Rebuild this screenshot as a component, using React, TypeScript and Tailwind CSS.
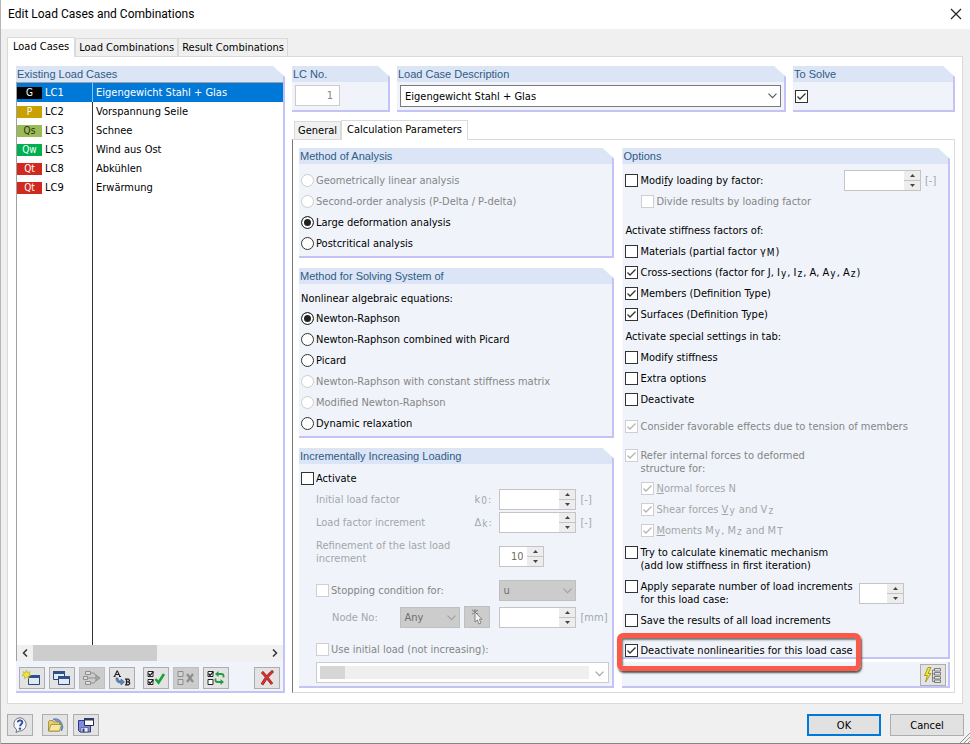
import React, { useId } from "react";

type Tone = "normal" | "muted" | "faint";

const toneText: Record<Tone, string> = {
  normal: "text-black",
  muted: "text-[#858585]",
  faint: "text-[#a3a6a9]",
};

function Group({
  title,
  className = "",
  children,
}: {
  title: string;
  className?: string;
  children: React.ReactNode;
}) {
  return (
    <section
      className={`flex flex-col border-r-2 border-b-2 border-[#c3c3f6] bg-[#f0f4fa] [clip-path:polygon(0_0,calc(100%_-_12px)_0,100%_11px,100%_100%,0_100%)] ${className}`}
    >
      <h2 className="h-4 shrink-0 bg-[#dbe5f5] pl-px font-['Liberation_Sans',Arial,sans-serif] text-[11px] leading-4 text-[#2f5b85]">
        {title}
      </h2>
      {children}
    </section>
  );
}

function CheckMark({ tone }: { tone: Tone }) {
  return (
    <svg viewBox="0 0 13 13" className="pointer-events-none absolute inset-0 size-[13px]" fill="none">
      <path d="M2.5 6.5 5 9 10.5 3.5" stroke={tone === "normal" ? "#333" : "#b4b4b4"} strokeWidth="1.3" />
    </svg>
  );
}

function Check({
  children,
  label,
  checked = false,
  tone = "normal",
  lines = 1,
  className = "",
}: {
  children?: React.ReactNode;
  label?: string;
  checked?: boolean;
  tone?: Tone;
  lines?: 1 | 2;
  className?: string;
}) {
  return (
    <label
      className={`flex gap-0.5 ${lines === 1 ? "h-[21px] items-center" : "items-start"} ${toneText[tone]} ${className}`}
    >
      <span className="relative size-[13px] shrink-0">
        <input
          type="checkbox"
          aria-label={label}
          defaultChecked={checked}
          disabled={tone !== "normal"}
          className="block size-[13px] appearance-none border border-[#333] bg-white disabled:border-[#cfcfcf]"
        />
        {checked && <CheckMark tone={tone} />}
      </span>
      {children && <span className="leading-[13px] whitespace-nowrap">{children}</span>}
    </label>
  );
}

function Radio({
  children,
  name,
  checked = false,
  disabled = false,
}: {
  children: React.ReactNode;
  name: string;
  checked?: boolean;
  disabled?: boolean;
}) {
  return (
    <label
      className={`flex h-[21px] items-center gap-0.5 whitespace-nowrap ${disabled ? "text-[#858585]" : "text-black"}`}
    >
      <input
        type="radio"
        name={name}
        defaultChecked={checked}
        disabled={disabled}
        className="size-[13px] shrink-0 appearance-none rounded-full border border-[#333] bg-white checked:bg-[#222] checked:shadow-[inset_0_0_0_2px_white] disabled:border-[#cccccc]"
      />
      {children}
    </label>
  );
}

function Spin({ label, value = "", className = "" }: { label: string; value?: string; className?: string }) {
  return (
    <span className={`flex h-[21px] border border-[#c4c4c4] bg-white ${className}`}>
      <input
        aria-label={label}
        defaultValue={value}
        disabled
        className="w-full min-w-0 flex-1 pr-1 text-right text-[#6d6d6d]"
      />
      <span className="flex w-4 shrink-0 flex-col divide-y divide-[#c4c4c4] bg-[#ededed]">
        <button type="button" aria-label={`${label} up`} className="grid flex-1 place-items-center">
          <svg viewBox="0 0 5 3" className="h-[3px] w-[5px]">
            <path d="M0 3 2.5 0 5 3z" fill="#444" />
          </svg>
        </button>
        <button type="button" aria-label={`${label} down`} className="grid flex-1 place-items-center">
          <svg viewBox="0 0 5 3" className="h-[3px] w-[5px]">
            <path d="M0 0h5L2.5 3z" fill="#444" />
          </svg>
        </button>
      </span>
    </span>
  );
}

function Chevron({ color }: { color: string }) {
  return (
    <svg viewBox="0 0 9 6" className="pointer-events-none absolute top-2 right-1 h-1.5 w-[9px]" fill="none">
      <path d="M.5.7 4.5 4.7 8.5.7" stroke={color} strokeWidth="1.1" />
    </svg>
  );
}

function GreySelect({ label, value, className = "" }: { label: string; value: string; className?: string }) {
  return (
    <span className={`relative block ${className}`}>
      <select
        aria-label={label}
        disabled
        className="block h-[21px] w-full appearance-none border border-[#bfbfbf] bg-[#cccccc] pl-[3px] text-[#6d6d6d] opacity-100"
      >
        <option>{value}</option>
      </select>
      <Chevron color="#a0a0a0" />
    </span>
  );
}

function ToolButton({
  label,
  disabled = false,
  className = "",
  children,
}: {
  label: string;
  disabled?: boolean;
  className?: string;
  children: React.ReactNode;
}) {
  return (
    <button
      type="button"
      aria-label={label}
      disabled={disabled}
      className={`grid h-[22px] w-[26px] shrink-0 place-items-center border ${disabled ? "border-[#bfbfbf] bg-[#cccccc]" : "border-[#adadad] bg-[#e3e3e3]"} ${className}`}
    >
      <svg viewBox="0 0 20 16" className="h-4 w-5" fill="none">
        {children}
      </svg>
    </button>
  );
}

function NewWindowIcon() {
  return (
    <>
      <path d="M6.5 5.500h11v9h-11z" fill="#dfe9f8" stroke="#30446e" />
      <path d="M6 5h12v3H6z" fill="#2f5088" />
      <path d="m4.500 0 1 2.600 2.800-.9L7 4l2.200 1.500-2.600.6.2 2.600-2.200-1.600L2.400 8.700l.2-2.600L0 5.500 2.200 4 1 1.700l2.600.9z" fill="#f1e23c" stroke="#a99b1d" strokeWidth=".5" />
    </>
  );
}

function CopyWindowIcon() {
  return (
    <>
      <path d="M1.500 1.500h11v8h-11z" fill="#dfe9f8" stroke="#30446e" />
      <path d="M1 1h12v3H1z" fill="#2f5088" />
      <path d="M6.500 6.500h11v8h-11z" fill="#dfe9f8" stroke="#30446e" />
      <path d="M6 6h12v3H6z" fill="#2f5088" />
    </>
  );
}

function CombineIcon() {
  return (
    <g stroke="#8f8f8f">
      <path d="M3.500 1.500h5v3h-5zM1.500 6.500h4v3h-4zM3.500 11.500h5v3h-5z" fill="#dedede" />
      <path d="M9 3h3l3 4M6 8h8M9 13h3l3-4" />
      <path d="m14 5 4 3-4 3z" fill="#a8a8a8" />
    </g>
  );
}

function RenumberIcon() {
  return (
    <>
      <path d="M2.500 6.500 5 1h.4L8 6.500M3.500 4.500h3.500M1.500 6.500h2M7 6.500h2" stroke="#222" strokeWidth="1.100" />
      <path d="M4 8c0 4 2 5 5 5v2l3.500-3L9 9v2c-2 0-3-1-3-3z" fill="#5d86c0" stroke="#2e5590" strokeWidth=".6" />
      <path d="M14.500 9v6M13 9.200h3.500q2 1.300 0 2.700h-2M16.500 12q2.500 1.200 0 2.800H13" stroke="#222" strokeWidth="1.300" />
    </>
  );
}

function SelectAllIcon() {
  return (
    <>
      <path d="M2 1.500h5v5H2zM2 9.500h5v5H2z" fill="#fff" stroke="#222" />
      <path d="m2.500 3.500 1.500 2 3.500-4M2.500 11.500l1.500 2 3.500-4" stroke="#222" strokeWidth="1.300" />
      <path d="m9.500 9 3 3.500L18 4" stroke="#18a33a" strokeWidth="2.600" />
    </>
  );
}

function ClearAllIcon() {
  return (
    <g stroke="#8c8c8c">
      <path d="M2 1.500h5v5H2zM2 9.500h5v5H2z" fill="#d4d4d4" />
      <path d="m11 4 6 8M17 4l-6 8" strokeWidth="2.200" />
    </g>
  );
}

function InvertIcon() {
  return (
    <>
      <path d="M2 1.500h5v5H2zM2 9.500h5v5H2z" fill="#fff" stroke="#222" />
      <path d="m2.500 3.500 1.500 2 3.500-4" stroke="#222" strokeWidth="1.300" />
      <path d="M17.500 7.500V6q0-2-2-2H12M9.500 8.500V10q0 2 2 2H15" stroke="#279a42" strokeWidth="1.800" />
      <path d="M12.500 1v6L9 4zM14.500 9v6l3.500-3z" fill="#279a42" />
    </>
  );
}

function DeleteIcon() {
  return (
    <>
      <path d="M5 2q4 4 10 12M16 1Q9 7 5 14.500" stroke="#7c1717" strokeWidth="2.800" />
      <path d="M5 2q4 4 10 12M16 1Q9 7 5 14.500" stroke="#e02f2f" strokeWidth="1.800" />
    </>
  );
}

function HelpIcon() {
  return (
    <>
      <path d="M10 .8a6.600 6.600 0 1 1-1 13.200l-3 1.500.6-2.700A6.600 6.600 0 0 1 10 .8z" fill="#f4f7fc" stroke="#6d7480" />
      <path d="M7.800 5.300C8 2.600 12.600 2.800 12.300 5.500 12.200 7 10.200 7 10.100 9.200" stroke="#2c4f96" strokeWidth="1.900" />
      <circle cx="10" cy="11.600" r="1.200" fill="#2c4f96" />
    </>
  );
}

function OpenIcon() {
  return (
    <>
      <path d="M8 2q8-2 10 8l-1.500 4L15 6z" fill="#6fa1dc" stroke="#34609c" strokeWidth=".6" />
      <path d="M3.500 14V4.500l1-1H8l1 1.500h5.500V14z" fill="#e5cd6d" stroke="#8f7a2a" strokeWidth=".7" />
      <path d="M3.500 14 6 7.500h10.500L14.500 14z" fill="#f5e79c" stroke="#8f7a2a" strokeWidth=".7" />
    </>
  );
}

function SaveIcon() {
  return (
    <>
      <path d="M2.500 3.500h12v11.500H4l-1.500-1.500z" fill="#7d8be0" stroke="#333a78" />
      <path d="M5 10.500h7V15H5z" fill="#e9ebf5" stroke="#333a78" strokeWidth=".6" />
      <path d="M6.500 11.500h2V15h-2z" fill="#333a78" />
      <path d="M8.500 1.500h9v7h-9z" fill="#fff" stroke="#222b3c" />
      <path d="M8 1h10v2.500H8z" fill="#2b3d66" />
    </>
  );
}

function SettingsIcon() {
  return (
    <>
      <path d="M5 .5 1.500 8.500h2.800L2.500 15 8 6.500H5L8 .5z" fill="#f5ec1c" stroke="#857e12" strokeWidth=".7" />
      <g stroke="#666" strokeWidth=".8" fill="#e4e4e4">
        <path d="M9.500 3v11.500" />
        <path d="M11.500 1.500h6v2.500h-6zM11.500 5.500h6V8h-6zM11.500 9.500h6V12h-6zM11.500 13h6v2.500h-6z" />
        <path d="M9.500 3h2M9.500 7h2M9.500 11h2M9.500 14.500h2" />
      </g>
    </>
  );
}

function PickIcon() {
  return (
    <>
      <path d="m5 1 6 4M11 1 5 5M8 0v4" stroke="#8b8b8b" strokeWidth="1.200" />
      <path d="M8 3v10l2.300-2 1.700 4 2-1-1.700-3.700H15z" fill="#f3f3f3" stroke="#7a7a7a" strokeWidth=".9" />
    </>
  );
}

const loadCases = [
  { type: "G", no: "LC1", name: "Eigengewicht Stahl + Glas", badge: "bg-black text-white" },
  { type: "P", no: "LC2", name: "Vorspannung Seile", badge: "bg-[#c8a000] text-white" },
  { type: "Qs", no: "LC3", name: "Schnee", badge: "bg-[#9bbb59] text-[#26300f]" },
  { type: "Qw", no: "LC5", name: "Wind aus Ost", badge: "bg-[#00b050] text-white" },
  { type: "Qt", no: "LC8", name: "Abkühlen", badge: "bg-[#d02a20] text-white" },
  { type: "Qt", no: "LC9", name: "Erwärmung", badge: "bg-[#d02a20] text-white" },
];

function LoadCaseList() {
  return (
    <Group title="Existing Load Cases" className="w-[269px] shrink-0">
      <div className="flex flex-1 flex-col border-t border-l border-[#a0a0a0] bg-white">
        <table className="w-full border-separate border-spacing-0">
          <tbody>
            {loadCases.map((lc, i) => (
              <tr key={lc.no} className={i === 0 ? "bg-[#0078d7] text-white" : ""}>
                <td className={`h-[19px] w-[76px] border-r p-0 ${i === 0 ? "border-[#8cc4f0]" : "border-[#333]"}`}>
                  <span className="flex items-center gap-[3px]">
                    <span className={`h-3 w-[25px] text-center text-[10px] leading-3 ${lc.badge}`}>
                      {lc.type}
                    </span>
                    {lc.no}
                  </span>
                </td>
                <td className="p-0 pl-[3px]">{lc.name}</td>
              </tr>
            ))}
          </tbody>
        </table>
        <div className="w-[76px] flex-1 border-r border-[#333]" />
        <div className="flex h-4 items-center bg-[#f0f0f0]">
          <button type="button" aria-label="Scroll left" className="grid h-full w-4 place-items-center">
            <svg viewBox="0 0 6 8" className="h-2 w-1.5" fill="none">
              <path d="M5 .5 1.500 4 5 7.500" stroke="#333" strokeWidth="1.500" />
            </svg>
          </button>
          <div className="flex h-full flex-1">
            <div className="h-full w-[53%] bg-[#cdcdcd]" />
          </div>
          <button type="button" aria-label="Scroll right" className="grid h-full w-4 place-items-center">
            <svg viewBox="0 0 6 8" className="h-2 w-1.5" fill="none">
              <path d="M1 .5 4.500 4 1 7.500" stroke="#333" strokeWidth="1.500" />
            </svg>
          </button>
        </div>
      </div>
      <div className="flex gap-1 px-[3px] pt-1.5 pb-0.5">
        <ToolButton label="New load case"><NewWindowIcon /></ToolButton>
        <ToolButton label="Copy load case"><CopyWindowIcon /></ToolButton>
        <ToolButton label="Combine" disabled><CombineIcon /></ToolButton>
        <ToolButton label="Renumber"><RenumberIcon /></ToolButton>
        <ToolButton label="Select all" className="ml-1"><SelectAllIcon /></ToolButton>
        <ToolButton label="Clear selection" disabled><ClearAllIcon /></ToolButton>
        <ToolButton label="Invert selection"><InvertIcon /></ToolButton>
        <ToolButton label="Delete" className="ml-auto"><DeleteIcon /></ToolButton>
      </div>
    </Group>
  );
}

function Sub({ children }: { children: React.ReactNode }) {
  return <span className="px-px align-[-1px] text-[10px] leading-none">{children}</span>;
}

function IncrementalLoading() {
  return (
    <Group title="Incrementally Increasing Loading" className="flex-1 [&>div]:pl-[17px]">
      <Check className="mt-1 ml-0.5">Activate</Check>
      <div className="grid grid-cols-[1fr_25px_77px_36px] items-center gap-y-0.5 text-[#a3a6a9]">
        <span>Initial load factor</span>
        <span>k<Sub>0</Sub>:</span>
        <Spin label="Initial load factor" />
        <span className="pl-1">[-]</span>
        <span>Load factor increment</span>
        <span>Δ<Sub>k</Sub>:</span>
        <Spin label="Load factor increment" />
        <span className="pl-1">[-]</span>
      </div>
      <div className="mt-1.5 grid grid-cols-[1fr_77px_36px] text-[#a3a6a9]">
        <span className="leading-[13px]">
          Refinement of the last load
          <br />
          increment
        </span>
        <Spin label="Refinement of the last load increment" value="10" className="mt-[7px] w-[45px]" />
      </div>
      <div className="mt-[13px] grid grid-cols-[1fr_77px_36px] items-center">
        <Check tone="muted">Stopping condition for:</Check>
        <GreySelect label="Stopping condition" value="u" />
      </div>
      <div className="mt-[5px] flex items-center text-[#a3a6a9]">
        <span className="flex-1 pl-4">Node No:</span>
        <GreySelect label="Node number" value="Any" className="w-[60px]" />
        <ToolButton label="Pick node" disabled className="mx-1">
          <PickIcon />
        </ToolButton>
        <Spin label="Limit value" className="ml-[5px] w-[77px]" />
        <span className="w-9 pl-1">[mm]</span>
      </div>
      <Check tone="muted" className="mt-[11px] ml-[17px]">
        Use initial load (not increasing):
      </Check>
      <div className="mt-0.5 pr-[3px]">
        <span className="relative flex h-[21px] border border-[#cccccc] bg-white">
          <select aria-label="Initial load" disabled className="absolute inset-0 appearance-none opacity-0">
            <option></option>
          </select>
          <span className="m-[3px] mr-[19px] flex-1 bg-[#efefef]">
            <span className="block h-full w-[25px] bg-[#d6d6d6]" />
          </span>
          <Chevron color="#a0a0a0" />
        </span>
      </div>
    </Group>
  );
}

function Options() {
  return (
    <div className="relative flex flex-[327] flex-col gap-[3px]">
      <Group title="Options" className="flex-1">
        <div className="flex flex-1 flex-col pl-[3px]">
          <div className="mt-1.5 flex items-center">
            <Check className="flex-1">
              Modi<u>f</u>y loading by factor:
            </Check>
            <Spin label="Loading factor" className="w-[77px]" />
            <span className="w-[27px] pl-1 text-[#a3a6a9]">[-]</span>
          </div>
          <Check tone="muted" className="pl-4">Divide results by loading factor</Check>
          <p className="mt-[9px] leading-5">Activate stiffness factors of:</p>
          <Check>
            Materials (partial factor γ<Sub>M</Sub>)
          </Check>
          <Check checked>
            Cross-sections (factor for J, I<Sub>y</Sub>, I<Sub>z</Sub>, A, A<Sub>y</Sub>, A<Sub>z</Sub>)
          </Check>
          <Check checked>Members (Definition Type)</Check>
          <Check checked>Surfaces (Definition Type)</Check>
          <p className="mt-0.5 leading-5">Activate special settings in tab:</p>
          <Check>Modify stiffness</Check>
          <Check>Extra options</Check>
          <Check>Deactivate</Check>
          <Check checked tone="muted" className="mt-1.5">
            Consider favorable effects due to tension of members
          </Check>
          <Check checked tone="muted" lines={2} className="mt-3">
            Refer internal forces to deformed
            <br />
            structure for:
          </Check>
          <Check checked tone="faint" className="mt-[3px] pl-4">
            <u>N</u>ormal forces N
          </Check>
          <Check checked tone="faint" className="pl-4">
            Shear forces <u>V</u><Sub>y</Sub> and V<Sub>z</Sub>
          </Check>
          <Check checked tone="faint" className="pl-4">
            <u>M</u>oments M<Sub>y</Sub>, M<Sub>z</Sub> and M<Sub>T</Sub>
          </Check>
          <Check lines={2} className="mt-[5px]">
            Try to calculate kinematic mechanism
            <br />
            (add low stiffness in first iteration)
          </Check>
          <div className="mt-2 flex items-center">
            <Check lines={2} className="flex-1">
              Apply separate number of load increments
              <br />
              for this load case:
            </Check>
            <Spin label="Number of load increments" className="mr-[44px] w-[45px]" />
          </div>
          <Check className="mt-1">Save the results of all load increments</Check>
          <Check checked className="mt-[9px] -mb-1">Deactivate nonlinearities for this load case</Check>
        </div>
      </Group>
      <div className="flex justify-end border-r-2 border-b-2 border-[#c3c3f6] bg-[#f0f4fa] pt-0.5 pr-0.5">
        <ToolButton label="Calculation settings"><SettingsIcon /></ToolButton>
      </div>
      <div className="pointer-events-none absolute bottom-[17px] -left-[5px] h-[38px] w-[244px] rounded-md border-[5px] border-[#fb5a4b] shadow-[1px_2px_2px_#555,inset_1px_2px_2px_#777]" />
    </div>
  );
}

function Tab({ active = false, children }: { active?: boolean; children: React.ReactNode }) {
  return (
    <button
      type="button"
      role="tab"
      aria-selected={active}
      className={
        active
          ? "relative z-10 -mb-px h-5 border border-b-0 border-[#dadada] bg-white px-[5px] pb-0.5"
          : "h-[18px] border border-b-0 border-[#dadada] bg-[#f0f0f0] px-[3px]"
      }
    >
      {children}
    </button>
  );
}

export default function App() {
  const descId = useId();
  return (
    <div className="flex min-h-screen flex-col border-l border-[#b5b5b5] bg-[#f0f0f0] font-['DejaVu_Sans_Condensed','DejaVu_Sans',sans-serif] text-[11px] leading-[13px] text-black">
      <header className="flex h-[29px] items-center justify-between bg-white pr-2 pb-0.5 pl-[7px]">
        <h1 className="font-[Roboto,'Noto_Sans',sans-serif] text-xs">Edit Load Cases and Combinations</h1>
        <button type="button" aria-label="Close">
          <svg viewBox="0 0 12 12" className="size-3" fill="none">
            <path d="m1 1 10 10M11 1 1 11" stroke="#222" strokeWidth="1.200" />
          </svg>
        </button>
      </header>

      <div role="tablist" className="mt-2 flex items-end pl-1.5">
        <Tab active>Load Cases</Tab>
        <Tab>Load Combinations</Tab>
        <Tab>Result Combinations</Tab>
      </div>

      <main className="mr-[7px] ml-1.5 flex flex-1 gap-[7px] border border-[#dadada] bg-white pt-[9px] pr-[7px] pb-[10px] pl-2">
        <LoadCaseList />
        <div className="flex flex-1 flex-col">
          <div className="flex gap-[7px]">
            <Group title="LC No." className="h-[46px] w-[98px]">
              <div className="pt-[3px] pl-[3px]">
                <input
                  aria-label="Load case number"
                  defaultValue="1"
                  disabled
                  className="block h-[21px] w-[45px] border border-[#cccccc] bg-white pr-1.5 text-right text-[#858585]"
                />
              </div>
            </Group>
            <Group title="Load Case Description" className="h-[46px] flex-1">
              <div className="relative mt-[3px] mr-[3px] ml-[3px]">
                <select
                  id={descId}
                  aria-label="Load Case Description"
                  className="block h-[22px] w-full appearance-none border border-[#7a7a7a] bg-white pl-1"
                >
                  <option>Eigengewicht Stahl + Glas</option>
                </select>
                <Chevron color="#555" />
              </div>
            </Group>
            <Group title="To Solve" className="h-[46px] w-[162px]">
              <Check checked label="To Solve" className="mt-1 ml-0.5" />
            </Group>
          </div>

          <div role="tablist" className="mt-2 flex items-end pl-0.5">
            <Tab>General</Tab>
            <Tab active>Calculation Parameters</Tab>
          </div>

          <div className="flex flex-1 gap-2 border border-[#dadada] border-l-[#777] bg-white pt-2 pr-1 pb-1 pl-1.5">
            <div className="flex flex-[315] flex-col gap-2.5">
              <Group title="Method of Analysis">
                <div className="pt-1.5 pb-0.5 pl-0.5">
                  <Radio name="analysis" disabled>Geometrically linear analysis</Radio>
                  <Radio name="analysis" disabled>Second-order analysis (P-Delta / P-delta)</Radio>
                  <Radio name="analysis" checked>Large deformation analysis</Radio>
                  <Radio name="analysis">Postcritical analysis</Radio>
                </div>
              </Group>
              <Group title="Method for Solving System of">
                <div className="pt-[5px] pb-0.5 pl-0.5">
                  <p className="leading-[19px]">Nonlinear algebraic equations:</p>
                  <Radio name="solver" checked>Newton-Raphson</Radio>
                  <Radio name="solver">Newton-Raphson combined with Picard</Radio>
                  <Radio name="solver">Picard</Radio>
                  <Radio name="solver" disabled>Newton-Raphson with constant stiffness matrix</Radio>
                  <Radio name="solver" disabled>Modified Newton-Raphson</Radio>
                  <Radio name="solver">Dynamic relaxation</Radio>
                </div>
              </Group>
              <IncrementalLoading />
            </div>
            <Options />
          </div>
        </div>
      </main>

      <footer className="relative flex items-center gap-[5px] px-1.5 pt-2.5 pb-[7px]">
        <ToolButton label="Help" className="mr-1"><HelpIcon /></ToolButton>
        <ToolButton label="Open"><OpenIcon /></ToolButton>
        <ToolButton label="Save"><SaveIcon /></ToolButton>
        <button type="button" className="ml-auto h-[22px] w-[74px] border-2 border-[#0078d7] bg-[#e1e1e1]">
          OK
        </button>
        <button type="button" className="ml-1 h-[22px] w-[74px] border border-[#adadad] bg-[#e1e1e1]">
          Cancel
        </button>
        <svg viewBox="0 0 10 10" className="absolute right-0 bottom-0 size-2.5" fill="none">
          <path d="M0 10 10 0M4 10l6-6M8 10l2-2" stroke="#999" />
        </svg>
      </footer>
      <div className="h-0.5 border-t border-[#858585] bg-[#a5a5a5]" />
    </div>
  );
}
